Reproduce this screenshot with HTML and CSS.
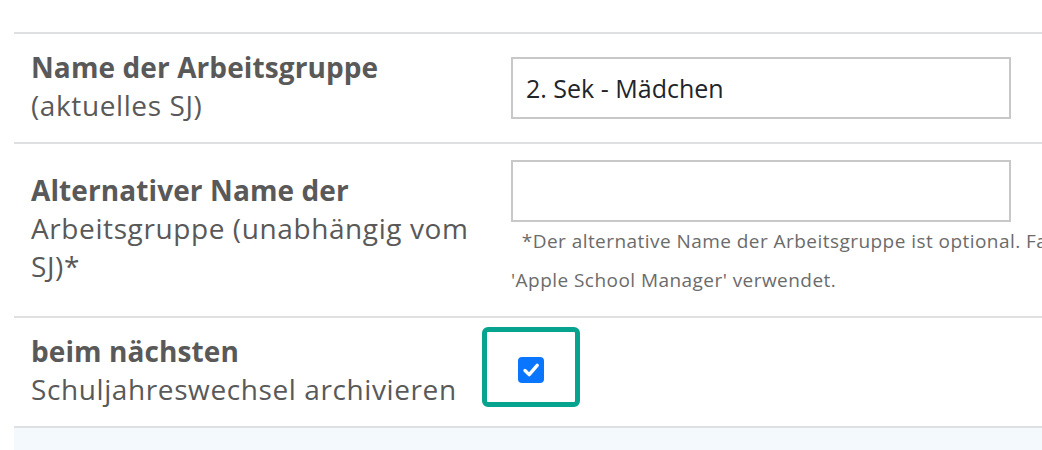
FILE: index.html
```html
<!DOCTYPE html>
<html lang="de">
<head>
<meta charset="utf-8">
<title>Arbeitsgruppe</title>
<link rel="stylesheet" href="styles.css">
</head>
<body>
<div class="page">
  <div class="form-table">
    <div class="row">
      <div class="label"><b class="label-main">Name der Arbeitsgruppe</b>(aktuelles SJ)</div>
      <div class="value">
        <div class="input">2. Sek - Mädchen</div>
      </div>
    </div>
    <div class="row">
      <div class="label"><b class="label-main">Alternativer Name der</b>Arbeitsgruppe (unabhängig vom SJ)*</div>
      <div class="value">
        <div class="input"></div>
        <div class="help">&nbsp;&nbsp;*Der alternative Name der Arbeitsgruppe ist optional. Falls angegeben, wird dieser Name im<br>'Apple School Manager' verwendet.</div>
      </div>
    </div>
    <div class="row row-last">
      <div class="label"><b class="label-main">beim nächsten</b>Schuljahreswechsel archivieren</div>
      <div class="value">
        <div class="focus-box">
          <span class="checkbox">
            <svg viewBox="0 0 26 26" width="26" height="26" aria-hidden="true"><path d="M7 13.5 L11.2 17.6 L19.2 8.4" fill="none" stroke="#fff" stroke-width="3.4" stroke-linecap="round" stroke-linejoin="round"/></svg>
          </span>
        </div>
      </div>
    </div>
  </div>
  <div class="footer-band"></div>
</div>
</body>
</html>
```
FILE: styles.css
```css
html, body {
  margin: 0;
  padding: 0;
  overflow: hidden;
  background: #ffffff;
}

body {
  font-family: "Open Sans", Lato, sans-serif;
  color: #595959;
}

.page {
  padding-top: 32px;
  padding-left: 14px;
}

.form-table {
  width: 1100px;
}

.row {
  display: grid;
  grid-template-columns: 463px 1fr;
  column-gap: 17px;
  align-items: center;
  padding: 16px 0 16px 17px;
  border-top: 2px solid #dee0e2;
}

.row-last {
  border-bottom: 2px solid #dee0e2;
}

.label {
  font-size: 28px;
  line-height: 38px;
  letter-spacing: 0.6px;
  color: #595959;
  margin: -2px 0 2px;
}

.label-main {
  display: block;
  font-weight: 700;
  letter-spacing: 0.1px;
}

.value {
  display: flex;
  flex-direction: column;
  align-items: flex-start;
}

.input {
  box-sizing: border-box;
  width: 500px;
  height: 62px;
  border: 2px solid #c8c8c8;
  padding: 0 13px;
  font-size: 25px;
  line-height: 58px;
  color: #212529;
}

.help {
  font-size: 19px;
  line-height: 39px;
  letter-spacing: 0.45px;
  color: #6b6b6b;
  white-space: nowrap;
}

.focus-box {
  box-sizing: border-box;
  width: 98px;
  height: 80px;
  margin: -10px 0 0 -29px;
  border: 5px solid #06a38e;
  border-radius: 6px;
  padding-top: 25px;
  display: flex;
  justify-content: center;
  align-items: flex-start;
}

.checkbox {
  width: 26px;
  height: 26px;
  border-radius: 4px;
  background: #0a75ff;
  display: flex;
}

.footer-band {
  height: 30px;
  background: #f4f9fd;
}
```
